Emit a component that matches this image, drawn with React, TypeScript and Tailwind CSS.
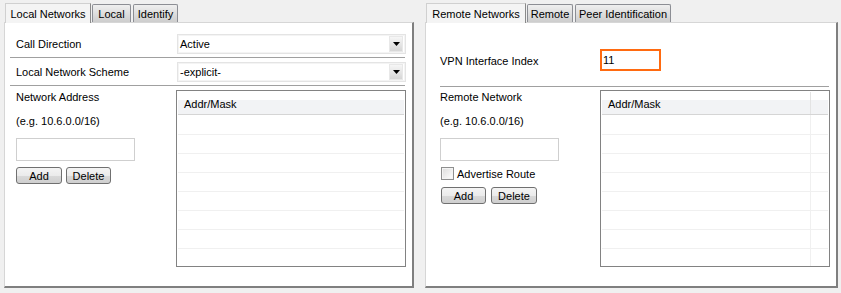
import React from 'react';

const Tab: React.FC<{ label: string; active?: boolean; className?: string }> = ({ label, active, className }) =>
    active ? (
        <div className={`h-[20px] flex items-center justify-center bg-[#f4f4f4] border-t border-l border-[#d0d0d0] border-r border-r-[#8a8a8a] relative z-10 mb-[-1px] ${className}`}>
            {label}
        </div>
    ) : (
        <div className={`h-[18px] flex items-center justify-center bg-[linear-gradient(to_bottom,#efefef,#cdcdcd)] border border-b-0 border-[#8c8e94] rounded-t-[2px] ${className}`}>
            {label}
        </div>
    );

const Select: React.FC<{ value: string }> = ({ value }) => (
    <div className="w-[229px] h-[20px] border border-[#e4e4e4] bg-white flex items-center pl-[2px] pr-[2px] shadow-[inset_0_0_0_1px_#f4f4f4]">
        <span className="flex-1">{value}</span>
        <div className="w-[14px] h-[16px] flex items-center justify-center bg-[linear-gradient(to_bottom,#f6f6f6,#d6d6d6)] border border-[#e8e8e8]">
            <svg width="7" height="4" viewBox="0 0 7 4">
                <path d="M0 0h7L3.5 4z" fill="#000" />
            </svg>
        </div>
    </div>
);

const Separator: React.FC<{ className?: string }> = ({ className }) => (
    <div className={`h-[2px] border-t border-[#a0a0a0] border-b border-b-white ${className}`} />
);

const Button: React.FC<{ label: string; className?: string }> = ({ label, className }) => (
    <div className={`h-[17px] flex items-center justify-center border border-[#707070] rounded-[3px] bg-[linear-gradient(to_bottom,#f4f4f4_0%,#ebebeb_50%,#dadada_51%,#cfcfcf_100%)] ${className}`}>
        {label}
    </div>
);

const ListView: React.FC<{ extraCol?: boolean }> = ({ extraCol }) => (
    <div className="w-[230px] h-[177px] border border-[#828282] bg-white p-px overflow-hidden">
        <div className="flex h-[23px] border-b border-[#d5d5d5]">
            <div className="flex-1 pl-[6px] pt-[1px] flex items-center bg-[linear-gradient(to_bottom,#ffffff_35%,#f2f3f5_35%)]">Addr/Mask</div>
            {extraCol && (
                <div className="w-[18px] border-l border-[#e3e3e3] bg-[linear-gradient(to_bottom,#ffffff_35%,#f2f3f5_35%)]" />
            )}
        </div>
        {[20, 19, 19, 19, 19, 19, 19, 19].map((h, i) => (
            <div key={i} className={`flex border-b border-[#f0f0f0] ${h === 20 ? 'h-[20px]' : 'h-[19px]'}`}>
                <div className="flex-1" />
                {extraCol && <div className="w-[18px] border-l border-[#f0f0f0]" />}
            </div>
        ))}
    </div>
);

const TextBox: React.FC = () => <div className="w-[119px] h-[23px] border border-[#cfcfcf] bg-white" />;

export default function App() {
    return (
        <div className="w-[841px] h-[293px] bg-[#f0f0f0] flex pl-[4px] gap-[11px] font-['Liberation_Sans',Arial,sans-serif] text-[11px] text-black leading-[14px]">
            {/* left tab control */}
            <div className="w-[410px] flex flex-col pt-[2px]">
                <div className="flex items-end h-[20px] pl-[1px]">
                    <Tab label="Local Networks" active className="w-[86px]" />
                    <Tab label="Local" className="w-[39px] ml-[1px]" />
                    <Tab label="Identify" className="w-[45px] ml-[2px]" />
                </div>
                <div className="h-[266px] bg-white border-t border-l border-[#d6d6d6] border-r-2 border-b-2 border-r-[#7f7f7f] border-b-[#7f7f7f] pl-[11px] pt-[11px] flex flex-col">
                    <div className="flex items-center h-[20px]">
                        <span className="w-[161px]">Call Direction</span>
                        <Select value="Active" />
                    </div>
                    <Separator className="mt-[3px] ml-[-6px] w-[395px]" />
                    <div className="flex items-center h-[20px] mt-[3px]">
                        <span className="w-[161px]">Local Network Scheme</span>
                        <Select value="-explicit-" />
                    </div>
                    <Separator className="mt-[3px] ml-[-6px] w-[395px]" />
                    <div className="flex mt-[3px]">
                        <div className="w-[160px] flex flex-col">
                            <span className="h-[14px]">Network Address</span>
                            <span className="h-[14px] mt-[10px]">(e.g. 10.6.0.0/16)</span>
                            <div className="mt-[10px]"><TextBox /></div>
                            <div className="flex mt-[6px]">
                                <Button label="Add" className="w-[46px]" />
                                <Button label="Delete" className="w-[45px] ml-[4px]" />
                            </div>
                        </div>
                        <ListView />
                    </div>
                </div>
            </div>

            {/* right tab control */}
            <div className="w-[413px] flex flex-col pt-[2px]">
                <div className="flex items-end h-[20px] pl-[1px]">
                    <Tab label="Remote Networks" active className="w-[100px]" />
                    <Tab label="Remote" className="w-[46px] ml-[1px]" />
                    <Tab label="Peer Identification" className="w-[96px] ml-[2px]" />
                </div>
                <div className="h-[266px] bg-white border-t border-l border-[#d6d6d6] border-r-2 border-b-2 border-r-[#7f7f7f] border-b-[#7f7f7f] pl-[14px] pt-[26px] flex flex-col">
                    <div className="flex items-center h-[22px]">
                        <span className="w-[160px] pt-[2px]">VPN Interface Index</span>
                        <div className="w-[61px] h-[22px] border-2 border-[#ff6a10] bg-white flex items-center pl-[1px] pb-[1px]">11</div>
                    </div>
                    <Separator className="mt-[15px] w-[389px]" />
                    <div className="flex mt-[2px]">
                        <div className="w-[160px] flex flex-col">
                            <span className="h-[14px]">Remote Network</span>
                            <span className="h-[14px] mt-[10px]">(e.g. 10.6.0.0/16)</span>
                            <div className="mt-[10px]"><TextBox /></div>
                            <div className="flex items-center mt-[6px] h-[13px] pl-[1px]">
                                <div className="w-[13px] h-[13px] border border-[#8e8f8f] bg-[linear-gradient(135deg,#dcdcdc,#ffffff)] shadow-[inset_0_0_0_1px_#f4f4f4]" />
                                <span className="ml-[3px]">Advertise Route</span>
                            </div>
                            <div className="flex mt-[7px] pl-[1px]">
                                <Button label="Add" className="w-[45px]" />
                                <Button label="Delete" className="w-[46px] ml-[5px]" />
                            </div>
                        </div>
                        <ListView extraCol />
                    </div>
                </div>
            </div>
        </div>
    );
}
